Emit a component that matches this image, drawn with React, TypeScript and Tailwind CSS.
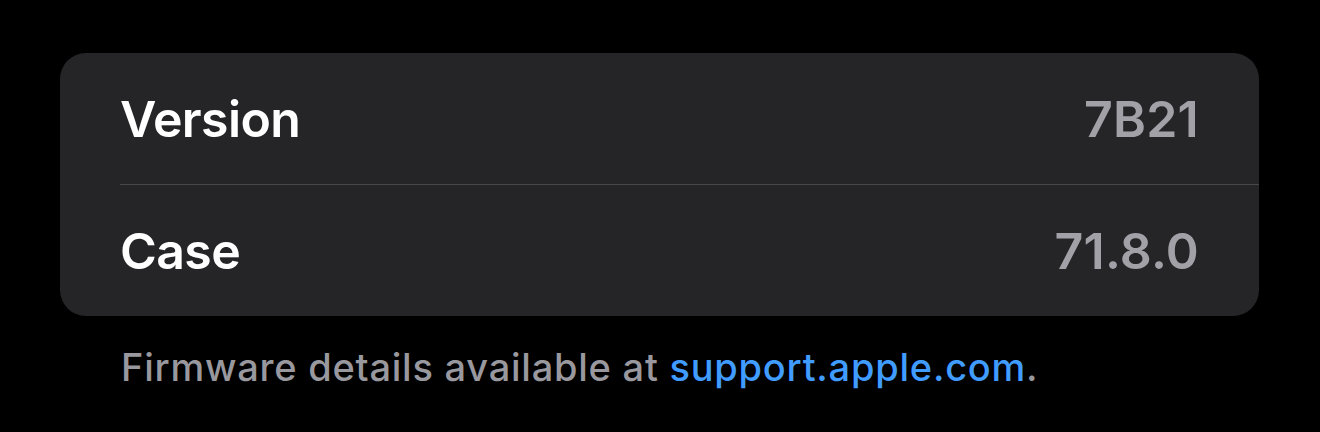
const rows = [
  { label: 'Version', value: '7B21' },
  { label: 'Case', value: '71.8.0' }
];

export default function App() {
  return (
    <div className="min-h-[432px] w-full bg-black pt-[53px] font-['Inter',sans-serif]">
      <section className="mx-[60px] w-[1199px] overflow-hidden rounded-[26px] bg-[#252527]">
        {rows.map((row, i) => (
          <div key={row.label} className={i > 0 ? 'ml-[60px] border-t border-[#48484b]' : 'ml-[60px]'}>
            <div className="flex h-[131px] items-center justify-between pr-[60px] text-[50px] leading-none">
              <span className="font-semibold tracking-[-0.012em] text-white">{row.label}</span>
              <span className="font-semibold tracking-[0.005em] text-[#a1a1a7]">{row.value}</span>
            </div>
          </div>
        ))}
      </section>
      <p className="ml-[121px] mt-[27px] text-[38px] font-medium leading-[48px] tracking-[0.02em] text-[#98989e]">
        Firmware details available at <span className="text-[#409cff]">support.apple.com</span>.
      </p>
    </div>
  );
}
